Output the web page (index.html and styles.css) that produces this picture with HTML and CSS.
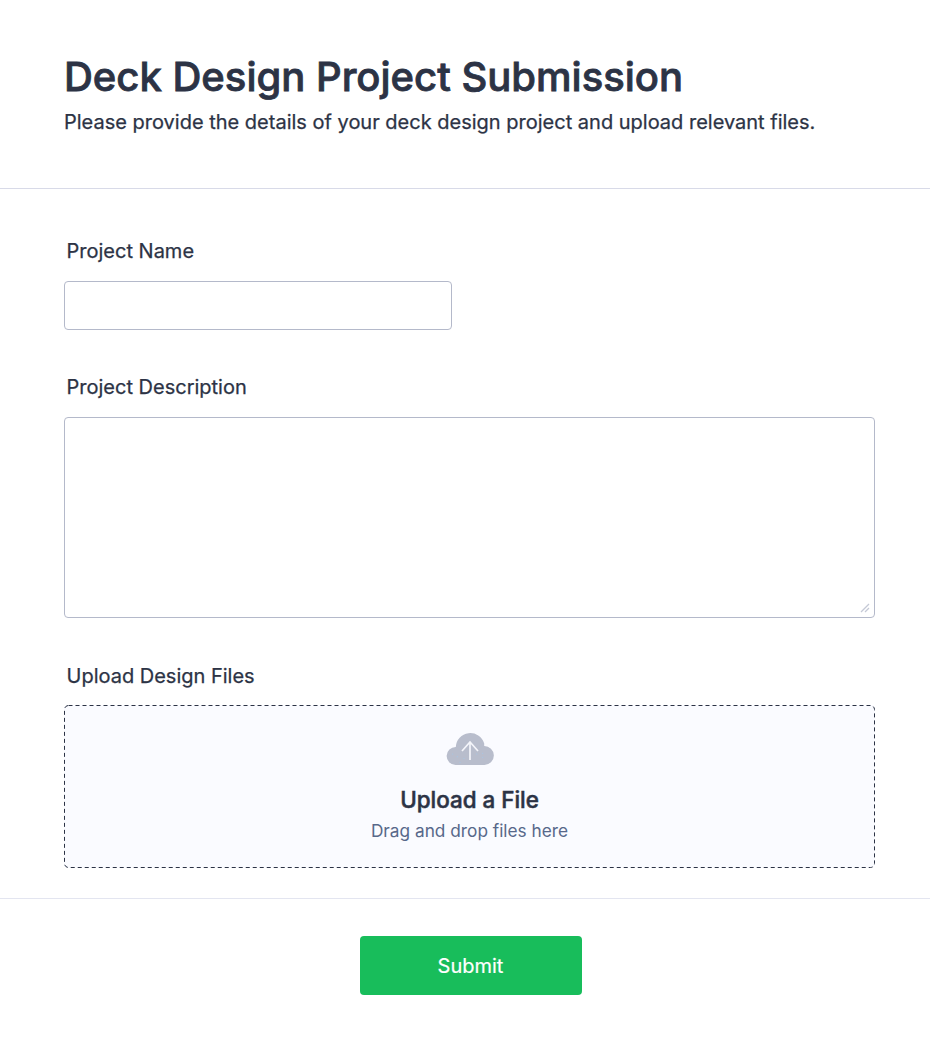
FILE: index.html
```html
<!DOCTYPE html>
<html lang="en">
<head>
<meta charset="utf-8">
<title>Deck Design Project Submission</title>
<link rel="stylesheet" href="styles.css">
</head>
<body>
<form class="page">
  <header class="header">
    <h1 class="title">Deck Design Project Submission</h1>
    <p class="subtitle">Please provide the details of your deck design project and upload relevant files.</p>
  </header>
  <div class="fields">
    <div class="field">
      <label class="label" for="name">Project Name</label>
      <input class="input" id="name" type="text">
    </div>
    <div class="field">
      <label class="label" for="desc">Project Description</label>
      <div class="textarea-wrap">
        <textarea class="textarea" id="desc"></textarea>
        <svg class="grip" width="10" height="10" viewBox="0 0 10 10" aria-hidden="true">
          <path d="M1 9L9 1M5 9L9 5"/>
        </svg>
      </div>
    </div>
    <div class="field field-upload">
      <span class="label">Upload Design Files</span>
      <div class="dropzone">
        <svg class="dash" width="811" height="163" viewBox="0 0 811 163" aria-hidden="true">
          <rect x="0.5" y="0.5" width="810" height="162" rx="4"/>
        </svg>
        <svg class="cloud" width="48" height="34" viewBox="0 0 48 34" aria-hidden="true">
          <path class="cloud-body" d="M9.500 33A9 9 0 1 1 9.800 15A14.500 14.500 0 0 1 38.200 11.500L38.200 14A9.500 9.500 0 1 1 38.500 33Z"/>
          <path class="cloud-dots" d="M6.700 22h0M11.300 24.700h0M18 26.300h0M14 30.300h0M30.700 22h0M36.700 25.300h0M36.700 21.300h0"/>
          <path class="cloud-arrow" d="M24 28V10M16 19L24 10L32 19"/>
        </svg>
        <div class="drop-title">Upload a File</div>
        <div class="drop-hint">Drag and drop files here</div>
      </div>
    </div>
  </div>
  <footer class="footer">
    <button class="submit" type="button">Submit</button>
  </footer>
</form>
</body>
</html>
```
FILE: styles.css
```css
* { box-sizing: border-box; }
html, body { margin: 0; background: #fff; }
body { font-family: Inter, "Liberation Sans", sans-serif; color: #2c3345; }
.page { display: flex; flex-direction: column; width: 930px; }
.header { height: 189px; padding: 52px 64px 0; border-bottom: 1px solid #d8dae8; }
.title { margin: 0; font-size: 40px; line-height: 50px; font-weight: 500; -webkit-text-stroke: 0.8px currentColor; }
.subtitle { margin: 9px 0 0; font-size: 20px; line-height: 22px; font-weight: 400; -webkit-text-stroke: 0.25px currentColor; }
.fields { display: flex; flex-direction: column; gap: 42px; padding: 47px 55px 0 64px; }
.field { display: flex; flex-direction: column; gap: 15px; }
.field-upload { margin-top: 1px; gap: 14px; }
.label { padding-left: 2.500px; font-size: 20px; line-height: 30px; font-weight: 400; -webkit-text-stroke: 0.25px currentColor; }
.input { display: block; width: 388px; height: 49px; border: 1px solid #b4b9ca; border-radius: 4px; background: #fff; }
.textarea-wrap { position: relative; height: 201px; }
.textarea { display: block; width: 811px; height: 201px; border: 1px solid #b4b9ca; border-radius: 4px; background: #fff; resize: none; }
.grip { position: absolute; right: 5px; bottom: 5px; }
.grip path { fill: none; stroke: #c5c9d6; stroke-width: 1.300; }
.dropzone { position: relative; display: flex; flex-direction: column; align-items: center; height: 163px; padding-top: 27px; border-radius: 4px; background: #fafbff; }
.dash { position: absolute; left: 0; top: 0; }
.dash rect { fill: none; stroke: #2c3345; stroke-width: 1; stroke-dasharray: 4 3; }
.cloud { display: block; margin-left: 1px; }
.cloud-body { fill: #b8bdcc; }
.cloud-dots { fill: none; stroke: #a6c6e6; stroke-width: 1.200; stroke-linecap: round; }
.cloud-arrow { fill: none; stroke: #f4f5fa; stroke-width: 1.700; }
.drop-title { margin-top: 19px; font-size: 22.400px; line-height: 30px; font-weight: 500; -webkit-text-stroke: 0.5px currentColor; }
.drop-hint { margin-top: 4px; font-size: 17.250px; line-height: 24px; font-weight: 400; color: #57688a; }
.footer { display: flex; justify-content: center; margin-top: 30px; padding-top: 37px; padding-left: 11px; border-top: 1px solid #e3e5f0; height: 147px; }
.submit { width: 222px; height: 59px; border: 0; border-radius: 4px; background: #18bd5b; color: #fff; font: 400 20px Inter, "Liberation Sans", sans-serif; -webkit-text-stroke: 0.2px currentColor; }
```
